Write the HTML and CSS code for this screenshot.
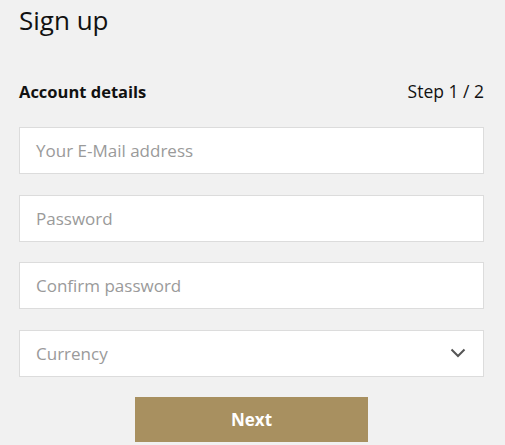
FILE: index.html
```html
<!DOCTYPE html>
<html>
<head>
<meta charset="utf-8">
<link rel="stylesheet" href="styles.css">
</head>
<body>
<div class="page">
  <h1 class="title">Sign up</h1>
  <div class="section-head">
    <span class="section-title">Account details</span>
    <span class="step">Step 1 / 2</span>
  </div>
  <form class="form">
    <div class="field"><span class="placeholder">Your E-Mail address</span></div>
    <div class="field"><span class="placeholder">Password</span></div>
    <div class="field"><span class="placeholder">Confirm password</span></div>
    <div class="field select"><span class="placeholder">Currency</span>
      <svg class="chevron" width="16" height="10" viewBox="0 0 16 10"><path d="M1.5 1.5 L8 8 L14.5 1.5" fill="none" stroke="#555" stroke-width="2"/></svg>
    </div>
    <div class="actions"><button type="button" class="next">Next</button></div>
  </form>
</div>
</body>
</html>
```
FILE: styles.css
```css
html, body { margin: 0; padding: 0; }
body {
  background: #f1f1f1;
  font-family: "Open Sans", "Noto Sans", sans-serif;
  color: #111;
}
.page { padding: 0 21px 0 19px; }
.title {
  margin: 0;
  padding-top: 3px;
  font-size: 26px;
  font-weight: 400;
  line-height: 34px;
}
.section-head {
  display: flex;
  justify-content: space-between;
  align-items: baseline;
  margin-top: 43px;
  font-size: 17px;
  line-height: 22px;
}
.section-title { font-weight: 700; font-size: 16.5px; }
.step { font-weight: 400; font-size: 17.5px; }
.form { display: flex; flex-direction: column; gap: 20.5px; margin-top: 24px; }
.field {
  height: 45px;
  background: #fff;
  border: 1px solid #dcdcdc;
  display: flex;
  align-items: center;
  padding: 0 16px;
  justify-content: space-between;
}
.placeholder { color: #9a9a9a; font-size: 17px; }
.chevron { margin-right: 1px; }
.actions { display: flex; justify-content: center; margin-top: -0.5px; }
.next {
  width: 233px;
  height: 45px;
  background: #a89060;
  border: none;
  color: #fff;
  font-family: inherit;
  font-weight: 700;
  font-size: 17px;
}
```
